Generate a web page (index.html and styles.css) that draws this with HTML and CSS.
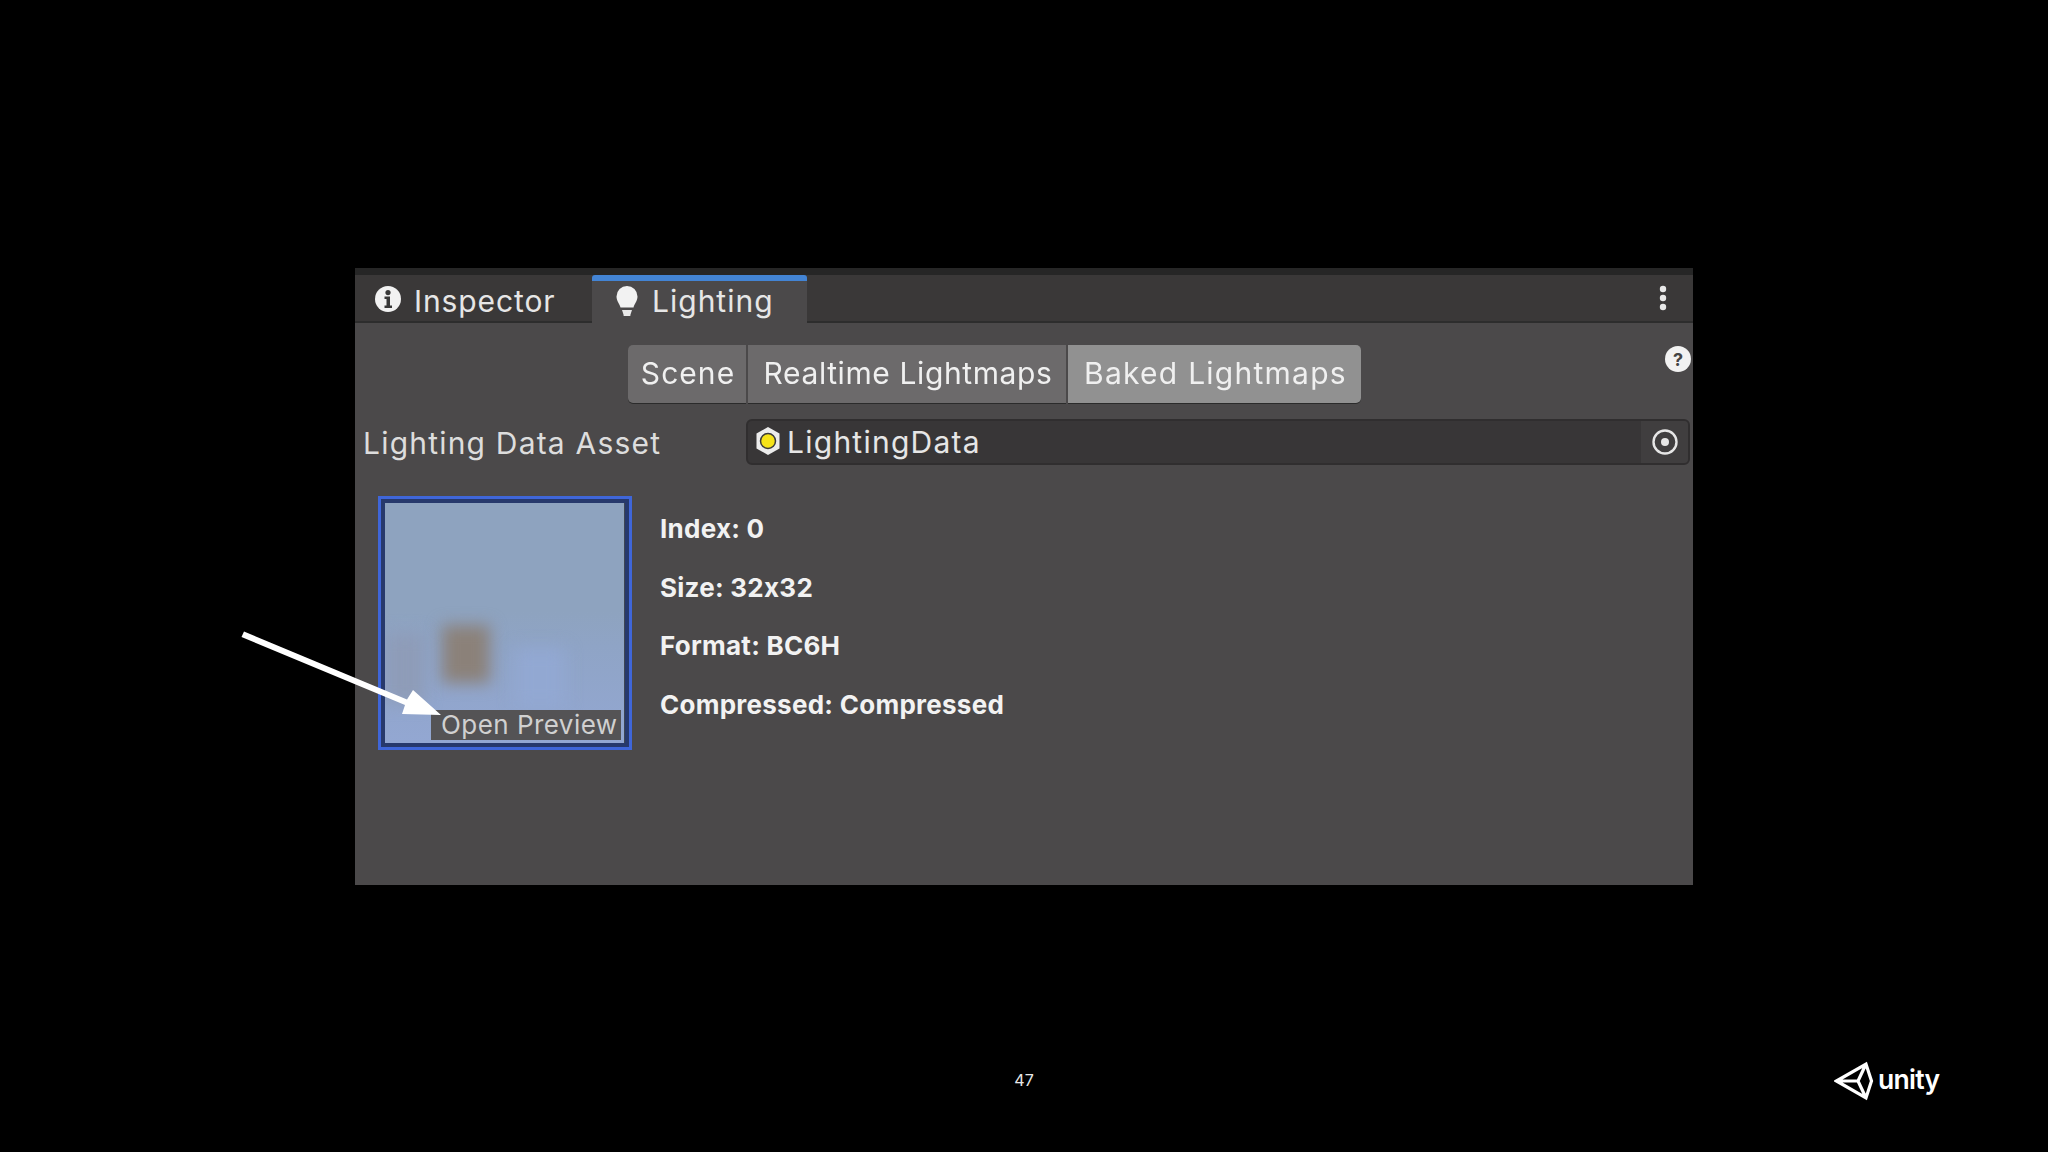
FILE: index.html
```html
<!DOCTYPE html>
<html lang="en">
<head>
<meta charset="utf-8">
<title>Lighting</title>
<link rel="stylesheet" href="styles.css">
</head>
<body>
<div class="slide">
  <section class="panel">
    <div class="tabbar">
      <div class="tab">
        <svg class="tab-icon" viewBox="0 0 26 26"><circle cx="13" cy="13" r="13" fill="#f2f2f2"/><circle cx="13" cy="6.6" r="2.6" fill="#383838"/><path d="M9.5 10.5h5.5v9h2v2.5H9.5v-2.500h2v-6.500h-2z" fill="#383838"/></svg>
        <span>Inspector</span>
      </div>
      <div class="tab tab-active">
        <svg class="tab-icon bulb" viewBox="0 0 22 30"><path d="M11 0a10.500 10.500 0 0 1 10.500 10.500c0 4.500-3 7-4 11H4.500c-1-4-4-6.500-4-11A10.500 10.500 0 0 1 11 0z" fill="#f2f2f2"/><path d="M6 24h10l-1.500 4.500a3.500 3.500 0 0 1-7 0z" fill="#e8e8e8"/></svg>
        <span>Lighting</span>
      </div>
      <div class="tab-spacer"></div>
      <svg class="kebab" viewBox="0 0 8 26"><circle cx="4" cy="4" r="3.200"/><circle cx="4" cy="13" r="3.200"/><circle cx="4" cy="22" r="3.200"/></svg>
    </div>
    <div class="toolbar">
      <div class="segments">
        <div class="seg seg-scene">Scene</div>
        <div class="seg seg-real">Realtime Lightmaps</div>
        <div class="seg seg-baked">Baked Lightmaps</div>
      </div>
      <svg class="help" viewBox="0 0 26 26"><circle cx="13" cy="13" r="13" fill="#f2f2f2"/><text x="13" y="19.500" text-anchor="middle" class="help-mark">?</text></svg>
    </div>
    <div class="asset-row">
      <div class="asset-label">Lighting Data Asset</div>
      <div class="asset-field">
        <svg class="asset-icon" viewBox="0 0 26 30"><path d="M13 1l11.500 6.500v15L13 29 1.500 22.500v-15z" fill="#ececec"/><circle cx="13" cy="15" r="7.500" fill="#f5e319" stroke="#3a3a3a" stroke-width="1.500"/></svg>
        <span class="asset-name">LightingData</span>
        <div class="picker">
          <svg class="picker-icon" viewBox="0 0 28 28"><circle cx="14" cy="14" r="11.500" fill="none" stroke="#e6e6e6" stroke-width="2.400"/><circle cx="14" cy="14" r="4" fill="#e6e6e6"/></svg>
        </div>
      </div>
    </div>
    <div class="details">
      <div class="thumb">
        <div class="thumb-image">
          <div class="blot blot-brown"></div>
          <div class="blot blot-blue"></div>
          <div class="blot blot-left"></div>
          <div class="preview-label">Open Preview</div>
        </div>
      </div>
      <div class="info">
        <div>Index: 0</div>
        <div>Size: 32x32</div>
        <div>Format: BC6H</div>
        <div>Compressed: Compressed</div>
      </div>
    </div>
  </section>
  <svg class="arrow" viewBox="0 0 240 120"><path d="M4 1.500 L167 69.500 L173 60 L201 85 L162 84 L165 75 L1.500 7 Z" fill="#ffffff"/></svg>
  <footer class="footer">
    <span class="page-no">47</span>
    <div class="logo">
      <svg class="logo-mark" viewBox="0 0 40 40"><path d="M2.500 20 L32 3 L37.500 20 L32 37 Z M2.500 20 H24 M32 3 L24 20 L32 37" fill="none" stroke="#fff" stroke-width="3.200" stroke-linejoin="miter"/></svg>
      <span class="logo-text">unity</span>
    </div>
  </footer>
</div>
</body>
</html>
```
FILE: styles.css
```css
* { box-sizing: border-box; }
html, body { margin: 0; padding: 0; background: #000; }
.slide {
  position: relative;
  width: 2048px;
  height: 1152px;
  padding: 268px 355px 0;
  background: #000;
  font-family: Inter, "Noto Sans", sans-serif;
  color: #e4e4e4;
  overflow: hidden;
}
.panel {
  width: 1338px;
  height: 617px;
  background: #4b494a;
  display: flex;
  flex-direction: column;
}
.tabbar {
  height: 55px;
  padding-top: 7px;
  display: flex;
  align-items: stretch;
  background: linear-gradient(#262626 0 7px, #3a3838 7px);
  border-bottom: 2px solid #2d2d2d;
}
.tab {
  width: 237px;
  display: flex;
  align-items: center;
  gap: 13px;
  padding: 5px 0 0 20px;
  font-size: 30px;
  letter-spacing: 0.9px;
  color: #e6e6e6;
}
.tab-active {
  width: 215px;
  margin-bottom: -2px;
  padding: 0 0 3px 24px;
  gap: 14px;
  letter-spacing: 1px;
  background: #4b494a;
  border-top: 6px solid #4384d4;
  border-radius: 3px 3px 0 0;
}
.tab-icon { width: 26px; height: 26px; flex: none; margin-top: -3px; }
.bulb { width: 22px; height: 30px; margin-top: 1px; }
.tab-spacer { flex: 1; }
.kebab { width: 8px; height: 26px; fill: #e8e8e8; margin: 10px 26px 0 0; }
.toolbar {
  height: 95px;
  padding: 22px 0 0 273px;
  display: flex;
  justify-content: space-between;
}
.segments { display: flex; height: 58px; gap: 2px; border-radius: 4px; filter: drop-shadow(0 1px 0 #2b2b2b); }
.seg {
  display: flex;
  align-items: center;
  justify-content: center;
  font-size: 30px;
  color: #f0f0f0;
  padding: 0 0 3px 2px;
}
.seg-scene { width: 118px; letter-spacing: 1.05px; background: #6c6a6b; border-radius: 5px 0 0 5px; }
.seg-real { width: 318px; letter-spacing: 0.6px; background: #6c6a6b; }
.seg-baked { width: 293px; letter-spacing: 1.25px; background: #919191; border-radius: 0 5px 5px 0; }
.help { width: 26px; height: 26px; margin: 1px 2px 0 0; }
.help-mark { font-family: Inter, sans-serif; font-weight: 700; font-size: 18px; fill: #444; }
.asset-row {
  height: 48px;
  padding: 0 3px 0 8px;
  display: flex;
  align-items: center;
}
.asset-label { width: 383px; font-size: 30px; letter-spacing: 1.2px; color: #dddddd; padding-top: 1px; }
.asset-field {
  flex: 1;
  height: 46px;
  padding-left: 7px;
  display: flex;
  align-items: center;
  gap: 6px;
  background: #383637;
  border: 2px solid #302e2f;
  border-radius: 6px;
  overflow: hidden;
}
.asset-icon { width: 26px; height: 30px; flex: none; margin-top: -3px; }
.asset-name { flex: 1; font-size: 30px; letter-spacing: 1.25px; color: #e6e6e6; }
.picker {
  width: 47px;
  height: 100%;
  display: flex;
  align-items: center;
  justify-content: center;
  background: #403e3f;
}
.picker-icon { width: 28px; height: 28px; }
.details {
  padding: 30px 0 0 23px;
  display: flex;
  gap: 28px;
}
.thumb {
  width: 254px;
  height: 254px;
  padding: 4px;
  background: #27396c;
  border: 3px solid #3f66d9;
  flex: none;
}
.thumb-image {
  position: relative;
  width: 100%;
  height: 100%;
  overflow: hidden;
  background: linear-gradient(#8ea3bf 0 45%, #8fa4c6 60%, #93a7d2);
  border-right: 1px solid #3e4654;
}
.blot { position: absolute; filter: blur(8px); }
.blot-brown { left: 57px; top: 122px; width: 48px; height: 58px; background: #8b8179; }
.blot-blue { left: 130px; top: 145px; width: 50px; height: 60px; background: #92a8d2; }
.blot-left { left: 0; top: 130px; width: 40px; height: 70px; background: #8e9cb8; }
.preview-label {
  position: absolute;
  right: 3px;
  bottom: 3px;
  width: 190px;
  height: 30px;
  padding-left: 10px;
  background: #545355;
  color: #d0d0d0;
  font-size: 26px;
  line-height: 29px;
  letter-spacing: 0.45px;
  white-space: nowrap;
}
.info {
  padding-top: 17px;
  display: flex;
  flex-direction: column;
  gap: 27.500px;
  font-size: 26px;
  line-height: 31px;
  font-weight: 700;
  letter-spacing: 0.26px;
  color: #f2f2f2;
}
.arrow {
  position: absolute;
  left: 240px;
  top: 630px;
  width: 240px;
  height: 120px;
}
.footer {
  position: absolute;
  left: 0;
  right: 0;
  top: 1058px;
  height: 44px;
}
.page-no {
  position: absolute;
  left: 0;
  right: 0;
  top: 12px;
  text-align: center;
  font-size: 16px;
  line-height: 20px;
  color: #e8e8e8;
}
.logo {
  position: absolute;
  left: 1834px;
  top: 3px;
  display: flex;
  align-items: center;
  gap: 4px;
}
.logo-mark { width: 40px; height: 40px; }
.logo-text { font-size: 26.500px; font-weight: 600; letter-spacing: -0.7px; color: #fff; margin-top: -5px; }
```
